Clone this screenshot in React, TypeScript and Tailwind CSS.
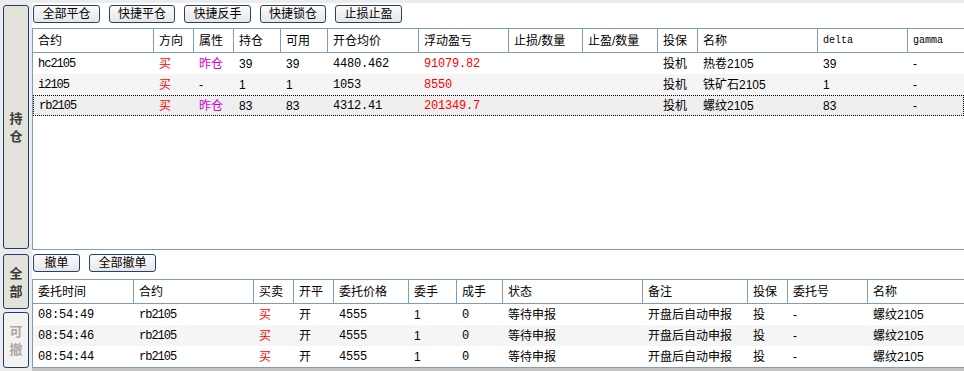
import React from "react";

const CN = "font-['Liberation_Sans','Noto_Sans_CJK_SC',sans-serif] text-[12px]";
const MONO = "font-['Liberation_Mono','Noto_Sans_CJK_SC',monospace] text-[12px] tracking-[-0.2px]";
const CODE = "font-['Liberation_Mono',monospace] text-[12px] tracking-[-1px]";

type Col = { label: string; w: number; kind?: "code" };

const posCols: Col[] = [
  { label: "合约", w: 121 },
  { label: "方向", w: 40 },
  { label: "属性", w: 40 },
  { label: "持仓", w: 47 },
  { label: "可用", w: 47 },
  { label: "开仓均价", w: 91 },
  { label: "浮动盈亏", w: 90 },
  { label: "止损/数量", w: 74 },
  { label: "止盈/数量", w: 75 },
  { label: "投保", w: 40 },
  { label: "名称", w: 120 },
  { label: "delta", w: 90, kind: "code" },
  { label: "gamma", w: 90, kind: "code" },
];

const ordCols: Col[] = [
  { label: "委托时间", w: 101 },
  { label: "合约", w: 120 },
  { label: "买卖", w: 40 },
  { label: "开平", w: 40 },
  { label: "委托价格", w: 75 },
  { label: "委手", w: 48 },
  { label: "成手", w: 46 },
  { label: "状态", w: 140 },
  { label: "备注", w: 105 },
  { label: "投保", w: 40 },
  { label: "委托号", w: 80 },
  { label: "名称", w: 100 },
];

type Cell = { t: string; cls: string };

const RED = "text-[#ff0000]";
const BLACK = "text-black";

const positions: Cell[][] = [
  ["hc2105", "买", "昨仓", "39", "39", "4480.462", "91079.82", "", "", "投机", "热卷2105", "39", "-"],
  ["i2105", "买", "-", "1", "1", "1053", "8550", "", "", "投机", "铁矿石2105", "1", "-"],
  ["rb2105", "买", "昨仓", "83", "83", "4312.41", "201349.7", "", "", "投机", "螺纹2105", "83", "-"],
].map((r) =>
  r.map((t, i) => {
    if (i === 0) return { t, cls: `${CODE} ${BLACK}` };
    if (i === 1) return { t, cls: `${CN} ${RED}` };
    if (i === 2) return { t, cls: `${CN} ${t === "昨仓" ? "text-[#d000d0]" : BLACK}` };
    if (i === 5) return { t, cls: `${MONO} ${BLACK}` };
    if (i === 6) return { t, cls: `${MONO} ${RED}` };
    return { t, cls: `${CN} ${BLACK}` };
  })
);

const orders: Cell[][] = ["08:54:49", "08:54:46", "08:54:44"].map((time) =>
  [time, "rb2105", "买", "开", "4555", "1", "0", "等待申报", "开盘后自动申报", "投", "-", "螺纹2105"].map(
    (t, i) => {
      if (i === 0 || i === 4 || i === 6) return { t, cls: `${MONO} ${BLACK}` };
      if (i === 1) return { t, cls: `${CODE} ${BLACK}` };
      if (i === 2) return { t, cls: `${CN} ${RED}` };
      return { t, cls: `${CN} ${BLACK}` };
    }
  )
);

function Btn({ label, w }: { label: string; w: number }) {
  return (
    <button
      className={`${CN} h-[18px] shrink-0 rounded-[3px] border border-[#23436f] bg-gradient-to-b from-[#fbfbfb] to-[#e6e6e6] leading-none text-black`}
      style={{ width: w }}
    >
      {label}
    </button>
  );
}

function Header({ cols }: { cols: Col[] }) {
  return (
    <div className="flex h-[24px] border-b border-[#7f9db9] bg-white">
      {cols.map((c) => (
        <div
          key={c.label}
          className={`flex shrink-0 items-center border-r border-[#7f9db9] pl-[5px] text-black ${
            c.kind === "code" ? "font-['Liberation_Mono',monospace] text-[10px]" : CN
          }`}
          style={{ width: c.w }}
        >
          {c.label}
        </div>
      ))}
    </div>
  );
}

function Row({ cols, cells, bg, selected }: { cols: Col[]; cells: Cell[]; bg: string; selected?: boolean }) {
  return (
    <div className={`flex h-[21px] ${bg} ${selected ? "border border-dotted border-black" : ""}`}>
      {cols.map((c, i) => (
        <div
          key={c.label}
          className={`flex shrink-0 items-center whitespace-nowrap pl-[5px] ${cells[i].cls}`}
          style={{ width: selected && i === 0 ? c.w - 1 : c.w }}
        >
          {cells[i].t}
        </div>
      ))}
    </div>
  );
}

function Tab({ text, h, dim }: { text: string; h: number; dim?: boolean }) {
  return (
    <div
      className={`flex w-[26px] flex-col items-center justify-center rounded-[3px] border border-[#1e3d6b] font-['Noto_Sans_CJK_SC',sans-serif] text-[13px] font-bold leading-[18px] ${
        dim ? "bg-[#f3f2ee] text-[color:#a8a8a8]" : "bg-[#e2e1da] text-[color:#3a3a3a]"
      }`}
      style={{ height: h }}
    >
      {text.split("").map((ch) => (
        <span key={ch} className="block h-[18px]">
          {ch}
        </span>
      ))}
    </div>
  );
}

export default function App() {
  return (
    <div className="flex h-[371px] w-[964px] overflow-hidden bg-[#ececec]">
      <div className="flex w-[32px] shrink-0 flex-col pl-[3px] pt-[5px]">
        <Tab text="持仓" h={244} />
        <div className="h-[5px]" />
        <Tab text="全部" h={55} />
        <div className="h-[3px]" />
        <Tab text="可撤" h={56} dim />
      </div>

      <div className="flex min-w-0 flex-1 flex-col pt-[3px]">
        <div className="flex h-[247px] flex-col bg-white">
          <div className="flex gap-[9px] pl-[1px] pt-[2px]">
            <Btn label="全部平仓" w={67} />
            <Btn label="快捷平仓" w={66} />
            <Btn label="快捷反手" w={67} />
            <Btn label="快捷锁仓" w={66} />
            <Btn label="止损止盈" w={67} />
          </div>
          <div className="mt-[5px] flex-1 overflow-hidden border-b border-l border-t border-[#7f9db9]">
            <Header cols={posCols} />
            <Row cols={posCols} cells={positions[0]} bg="bg-white" />
            <Row cols={posCols} cells={positions[1]} bg="bg-[#f5f5f5]" />
            <Row cols={posCols} cells={positions[2]} bg="bg-[#efefef]" selected />
          </div>
        </div>

        <div className="flex h-[118px] flex-col bg-white">
          <div className="flex gap-[9px] pl-[1px] pt-[4px]">
            <Btn label="撤单" w={47} />
            <Btn label="全部撤单" w={67} />
          </div>
          <div className="mt-[7px] flex-1 overflow-hidden border-b border-l border-t border-[#7f9db9]">
            <Header cols={ordCols} />
            <Row cols={ordCols} cells={orders[0]} bg="bg-white" />
            <Row cols={ordCols} cells={orders[1]} bg="bg-[#f5f5f5]" />
            <Row cols={ordCols} cells={orders[2]} bg="bg-white" />
          </div>
        </div>
        <div className="h-[3px] bg-[#c4c4c4]" />
      </div>
    </div>
  );
}
